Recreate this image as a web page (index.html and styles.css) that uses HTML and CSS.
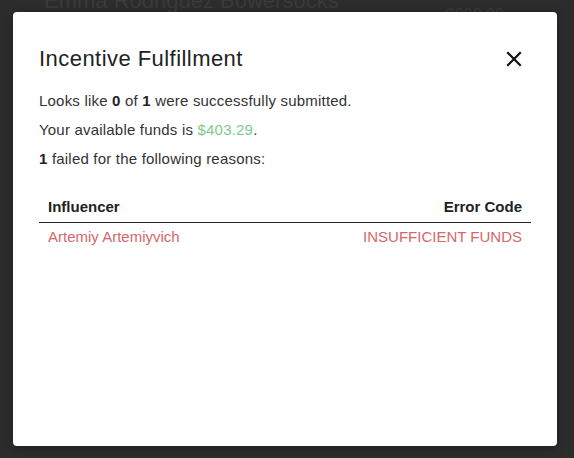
FILE: index.html
```html
<!DOCTYPE html>
<html>
<head>
<meta charset="utf-8">
<link rel="stylesheet" href="styles.css">
</head>
<body>
<div class="backdrop">
  <div class="bg-text bg-name">Emma Rodriguez Bowersocks</div>
  <div class="bg-text bg-amount">$000.00</div>
  <div class="modal">
    <div class="modal-header">
      <h2 class="modal-title">Incentive Fulfillment</h2>
      <button class="close" aria-label="Close">
        <svg width="16" height="16" viewBox="0 0 16 16"><path d="M2 2 L14 14 M14 2 L2 14" stroke="#111" stroke-width="2.2" stroke-linecap="square" fill="none"/></svg>
      </button>
    </div>
    <p class="line">Looks like <b>0</b> of <b>1</b> were successfully submitted.</p>
    <p class="line">Your available funds is <span class="funds">$403.29</span>.</p>
    <p class="line"><b>1</b> failed for the following reasons:</p>
    <table class="errors">
      <thead>
        <tr><th class="left">Influencer</th><th class="right">Error Code</th></tr>
      </thead>
      <tbody>
        <tr><td class="left">Artemiy Artemiyvich</td><td class="right">INSUFFICIENT FUNDS</td></tr>
      </tbody>
    </table>
  </div>
</div>
</body>
</html>
```
FILE: styles.css
```css
html, body {
  margin: 0;
  padding: 0;
  background: #2b2b2b;
  font-family: "Liberation Sans", Arial, Helvetica, sans-serif;
}
.backdrop {
  position: relative;
  width: 574px;
  height: 458px;
  overflow: hidden;
  background: #2c2c2c;
  padding: 12px 0 0 13px;
  box-sizing: border-box;
}
.bg-text {
  position: absolute;
  color: #3a3a3a;
  font-size: 22px;
}
.bg-name { left: 44px; top: -12px; }
.bg-amount { left: 446px; top: 6px; font-size: 16px; }
.modal {
  position: relative;
  width: 544px;
  height: 434px;
  background: #fff;
  border-radius: 4px;
  box-sizing: border-box;
  padding: 34px 26px 26px 26px;
  box-shadow: 0 2px 8px rgba(0,0,0,0.3);
}
.modal-header {
  display: flex;
  justify-content: space-between;
  align-items: center;
  margin-bottom: 20px;
}
.modal-title {
  margin: 0;
  font-size: 22px;
  font-weight: normal;
  letter-spacing: 0.45px;
  color: #222;
  line-height: 26px;
}
.close {
  border: 0;
  background: none;
  padding: 0;
  margin-right: 9px;
  width: 16px;
  height: 16px;
  display: flex;
}
.line {
  margin: 0 0 11px 0;
  font-size: 15px;
  letter-spacing: 0.2px;
  line-height: 18px;
  color: #333;
}
.line b { color: #222; }
.funds { color: #7ccb91; }
.errors {
  width: 100%;
  border-collapse: collapse;
  margin-top: 30px;
  font-size: 15px;
}
.errors th {
  font-weight: bold;
  color: #222;
  padding: 0 9px 6px 9px;
  border-bottom: 1.5px solid #222;
  line-height: 18px;
}
.errors td {
  color: #d5686a;
  padding: 5px 9px;
  line-height: 18px;
}
.left { text-align: left; }
.right { text-align: right; }
```
